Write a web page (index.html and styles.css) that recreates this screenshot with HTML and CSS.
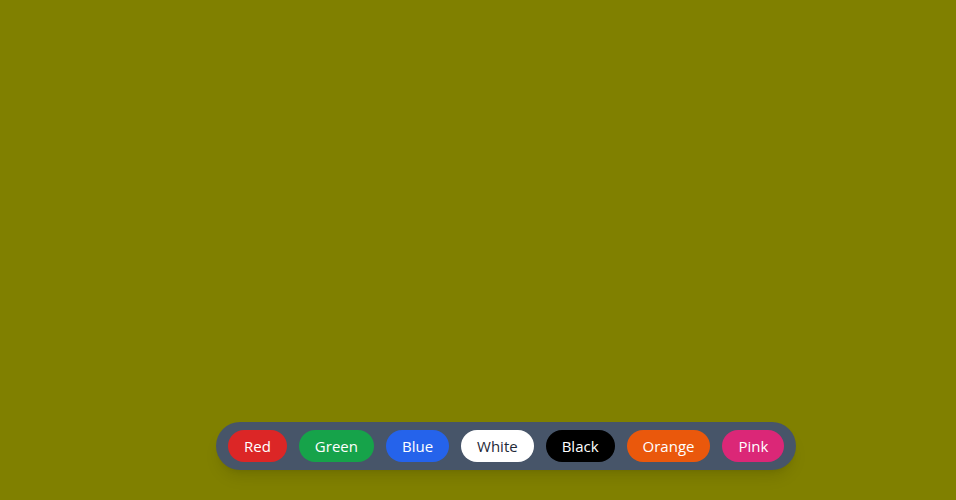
FILE: index.html
```html
<!DOCTYPE html>
<html>
<head>
<meta charset="utf-8">
<link rel="stylesheet" href="styles.css">
</head>
<body>
<div class="page">
  <div class="bar">
    <button class="chip red">Red</button>
    <button class="chip green">Green</button>
    <button class="chip blue">Blue</button>
    <button class="chip white">White</button>
    <button class="chip black">Black</button>
    <button class="chip orange">Orange</button>
    <button class="chip pink">Pink</button>
  </div>
</div>
</body>
</html>
```
FILE: styles.css
```css
html, body {
  margin: 0;
  padding: 0;
  height: 100%;
  background: #808000;
}
.page {
  box-sizing: border-box;
  height: 100vh;
  display: flex;
  align-items: flex-end;
  padding: 0 0 30px 216px;
}
.bar {
  display: flex;
  gap: 12px;
  padding: 8px 12px;
  background: #475569;
  border-radius: 9999px;
  box-shadow: 0 10px 15px -3px rgba(0,0,0,0.1), 0 4px 6px -4px rgba(0,0,0,0.1);
}
.chip {
  height: 32px;
  border: none;
  border-radius: 9999px;
  padding: 0 16px;
  font-family: "Open Sans", sans-serif;
  font-size: 15px;
  color: #fff;
  cursor: pointer;
}
.red { background: #dc2626; }
.green { background: #16a34a; }
.blue { background: #2563eb; }
.white { background: #fff; color: #1f2937; }
.black { background: #000; }
.orange { background: #ea580c; }
.pink { background: #db2777; }
```
